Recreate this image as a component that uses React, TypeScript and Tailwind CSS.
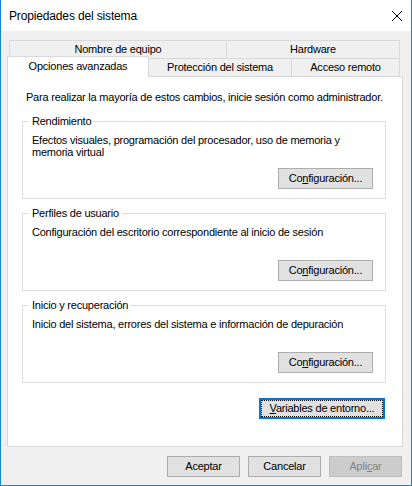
import { ReactNode } from "react"

const Btn = ({ children, w, disabled }: { children: ReactNode; w: string; disabled?: boolean }) => (
  <div
    className={
      "h-[21px] flex items-center justify-center border " +
      w +
      (disabled ? " bg-[#cccccc] border-[#bfbfbf] text-[#838383]" : " bg-[#e1e1e1] border-[#adadad]")
    }
  >
    <span className="leading-[13px]">{children}</span>
  </div>
)

const Group = ({ title, children }: { title: string; children: ReactNode }) => (
  <fieldset className="w-[364px] ml-[14px] border border-[#dcdcdc]">
    <legend className="ml-[6px] px-[3px] leading-[13px]">{title}</legend>
    <div className="h-[70px] flex flex-col justify-between pt-[6px] pb-[9px] pl-[9px]">
      <p className="leading-[12px] pr-[20px]">{children}</p>
      <div className="self-end mr-[12px]">
        <Btn w="w-[95px]">
          Co<span className="underline">n</span>figuración...
        </Btn>
      </div>
    </div>
  </fieldset>
)

export default function App() {
  return (
    <div className="w-[412px] h-[486px] flex flex-col border-x border-b border-[#1883d7] bg-[#f0f0f0] text-black text-[11px] tracking-[-0.22px] font-['Liberation_Sans',Arial,sans-serif]">
      {/* title bar */}
      <div className="h-[31px] shrink-0 bg-white flex items-center justify-between pl-[8px] pr-[9px]">
        <span className="text-[12px] tracking-[-0.15px]">Propiedades del sistema</span>
        <svg width="10" height="10" viewBox="0 0 10 10" fill="none" stroke="#000" strokeWidth="1">
          <path d="M0 0L10 10M10 0L0 10" />
        </svg>
      </div>

      <div className="flex-1 flex flex-col pl-[6px] pr-[8px] pt-[9px]">
        {/* back row of tabs */}
        <div className="ml-[2px] flex h-[18px]">
          <div className="w-[218px] border-t border-x border-[#d9d9d9] text-center pt-[2px] leading-[13px]">
            Nombre de equipo
          </div>
          <div className="w-[173px] border-t border-r border-[#d9d9d9] text-center pt-[2px] leading-[13px]">
            Hardware
          </div>
        </div>
        {/* front row of tabs */}
        <div className="flex items-end h-[18px]">
          <div className="relative z-10 w-[142px] h-[21px] -mb-px bg-white border-t border-x border-[#d9d9d9] text-center pt-[3px] leading-[13px]">
            Opciones avanzadas
          </div>
          <div className="w-[143px] h-[18px] border-t border-r border-[#d9d9d9] text-center pt-[2px] leading-[13px]">
            Protección del sistema
          </div>
          <div className="w-[108px] h-[18px] border-t border-r border-[#d9d9d9] text-center pt-[2px] leading-[13px]">
            Acceso remoto
          </div>
        </div>

        {/* tab page */}
        <div className="h-[371px] bg-white border border-[#d9d9d9] flex flex-col pt-[14px]">
          <p className="ml-[18px] leading-[13px]">
            Para realizar la mayoría de estos cambios, inicie sesión como administrador.
          </p>
          <div className="mt-[11px] flex flex-col gap-[8px]">
            <Group title="Rendimiento">
              Efectos visuales, programación del procesador, uso de memoria y memoria virtual
            </Group>
            <Group title="Perfiles de usuario">
              Configuración del escritorio correspondiente al inicio de sesión
            </Group>
            <Group title="Inicio y recuperación">
              Inicio del sistema, errores del sistema e información de depuración
            </Group>
          </div>
          <div className="mt-[15px] flex justify-end pr-[17px]">
            <div className="w-[126px] h-[21px] border-2 border-[#0078d7] bg-[#e1e1e1]">
              <div className="h-full border border-dotted border-black flex items-center justify-center leading-[13px]">
                <span>
                  <span className="underline">V</span>ariables de entorno...
                </span>
              </div>
            </div>
          </div>
        </div>

        {/* dialog buttons */}
        <div className="mt-[9px] flex justify-end gap-[8px] pr-[1px]">
          <Btn w="w-[73px]">Aceptar</Btn>
          <Btn w="w-[73px]">Cancelar</Btn>
          <Btn w="w-[73px]" disabled>
            Apli<span className="underline">c</span>ar
          </Btn>
        </div>
      </div>
    </div>
  )
}
